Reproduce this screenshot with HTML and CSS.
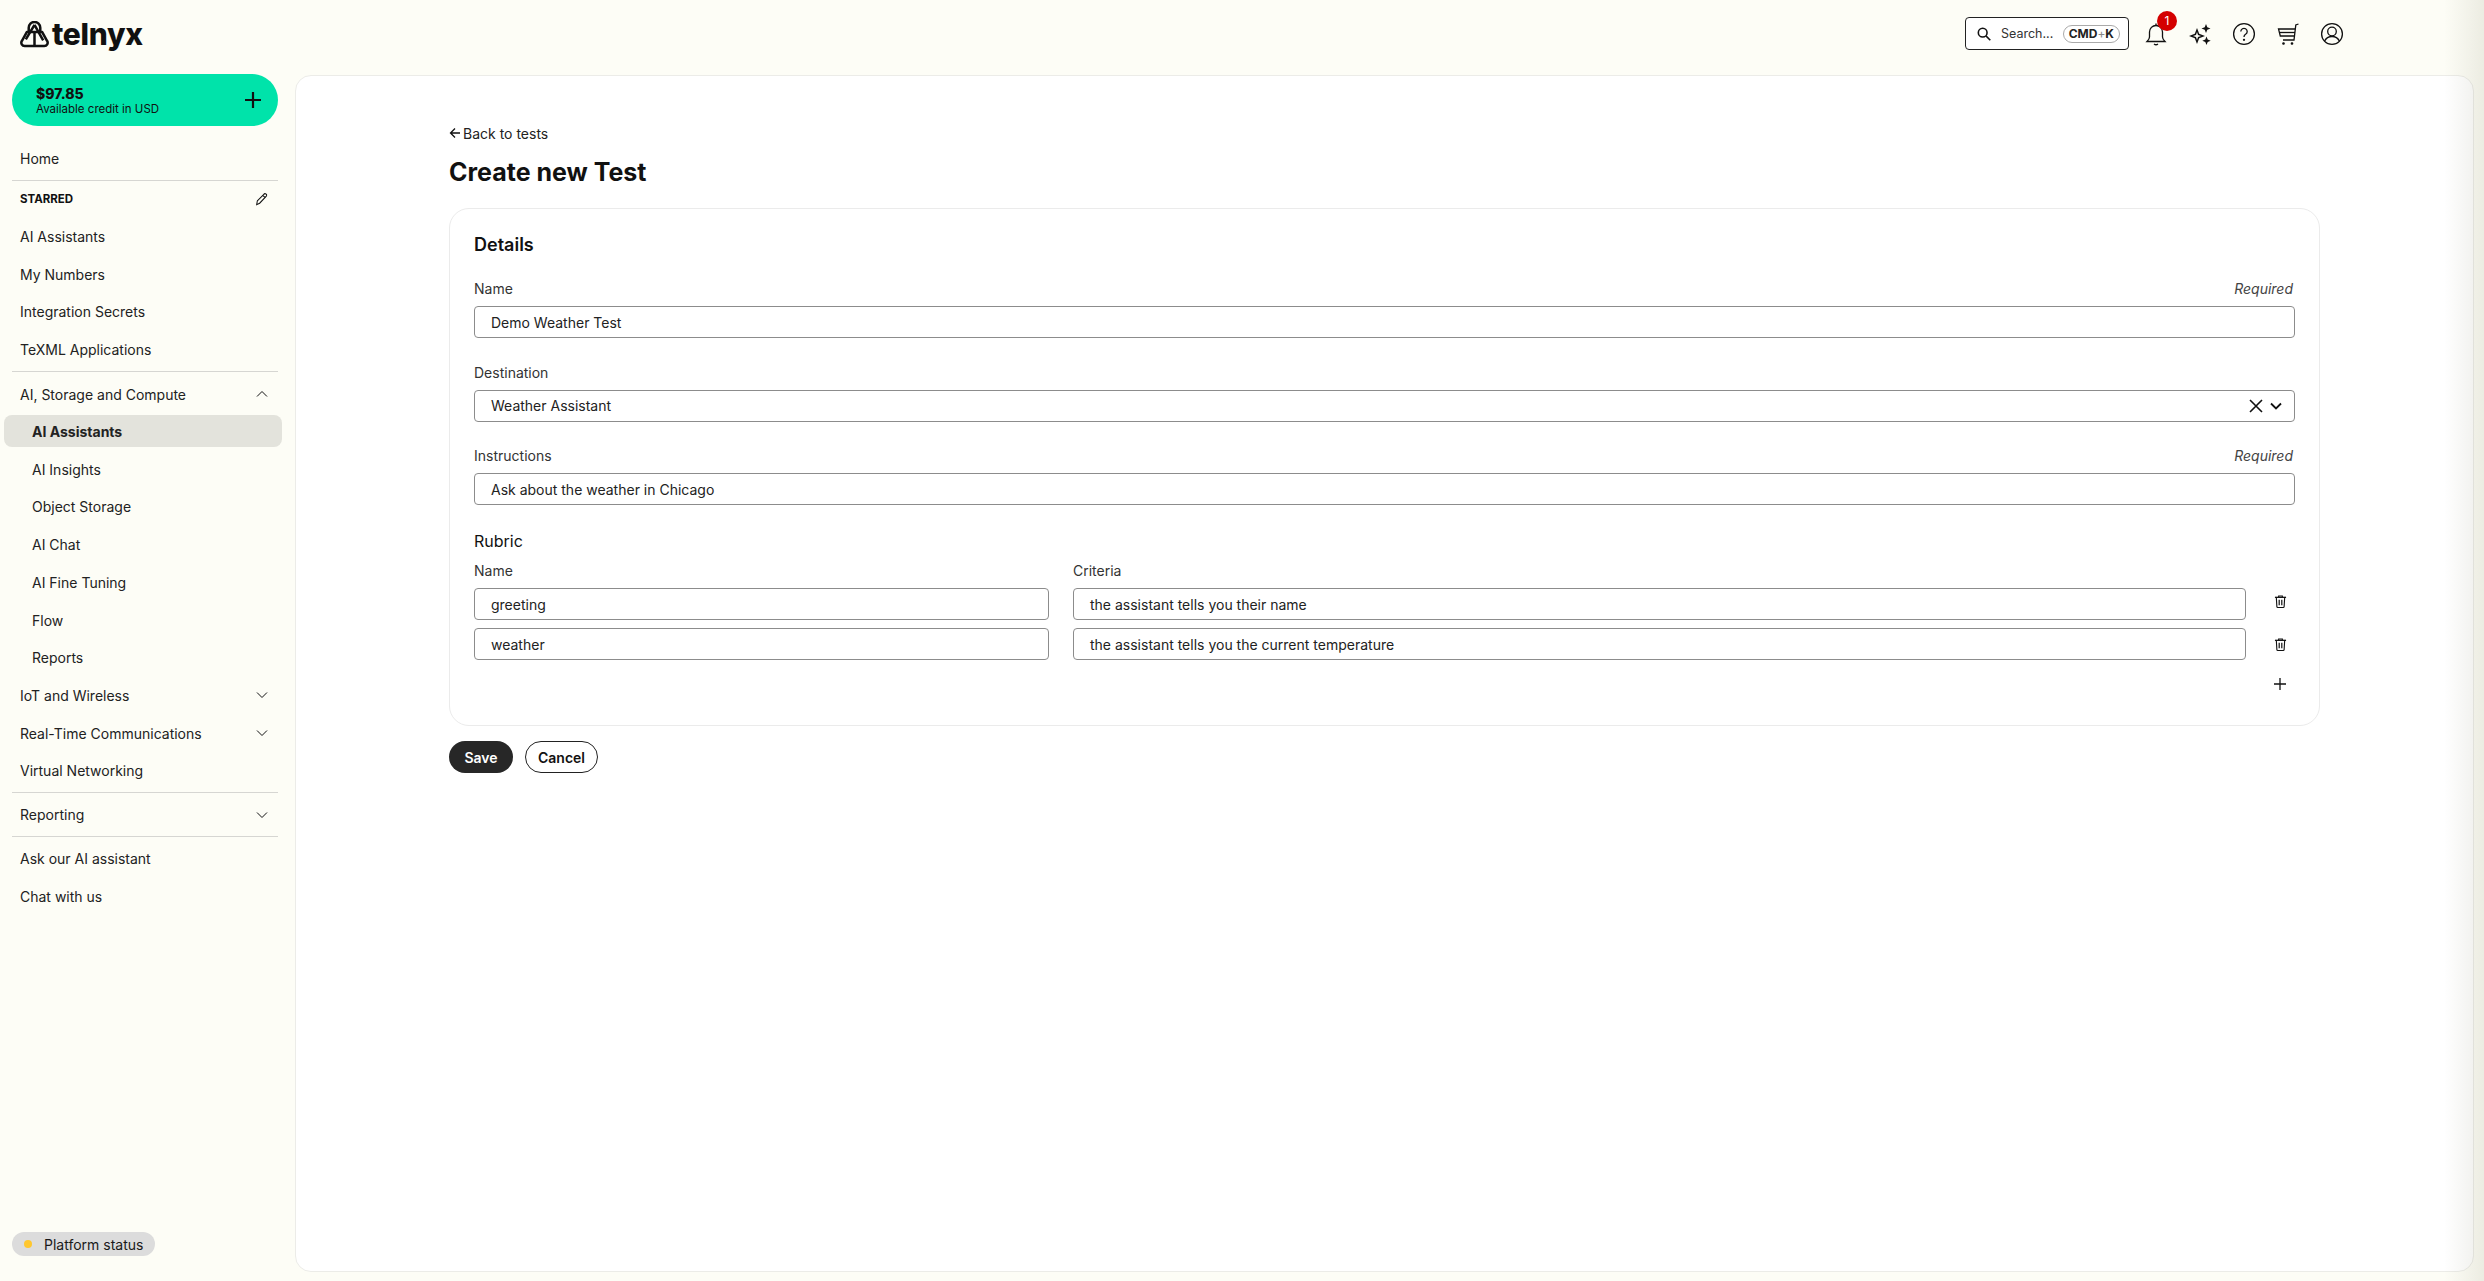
FILE: index.html
```html
<!DOCTYPE html>
<html lang="en">
<head>
<meta charset="utf-8">
<title>Create new Test</title>
<link rel="stylesheet" href="styles.css">
</head>
<body>
<div class="app">
  <div class="page">
    <header class="topbar">
      <a class="logo">
        <svg class="logo-mark" viewBox="0 0 30 28" fill="none" stroke="#111" stroke-width="2.600" stroke-linejoin="round"><path d="M9 12V7a6 6 0 0 1 12 0v5"/><path d="M15 4 6 19M15 4l9 16"/><path d="M7 11.500h16l5 9a3.500 3.500 0 0 1-3 5.500H5a3.500 3.500 0 0 1-3-5.500z"/><path d="M15 12v14"/></svg>
        <span class="logo-text">telnyx</span>
      </a>
      <div class="top-actions">
        <div class="search">
          <svg class="ic-search" viewBox="0 0 16 16" fill="none" stroke="#111" stroke-width="1.800"><circle cx="6.500" cy="6.500" r="5"/><path d="m10.200 10.200 5 5"/></svg>
          <span class="search-text">Search...</span>
          <span class="kbd"><b>CMD</b>+<b>K</b></span>
        </div>
        <div class="icons">
          <span class="icon-btn">
            <svg viewBox="0 0 24 24" fill="none" stroke="#111" stroke-width="1.300"><path d="M12 3.500a6.500 6.500 0 0 0-6.500 6.500v5c0 2-1 3-2.500 4.500h18c-1.500-1.500-2.500-2.500-2.500-4.500v-5A6.500 6.500 0 0 0 12 3.500Z"/><path d="M12 3.500V1.500"/><path d="M10 22q2 1.500 4 0"/></svg>
            <span class="badge">1</span>
          </span>
          <span class="icon-btn">
            <svg viewBox="0 0 24 24" fill="#111"><path d="M9 6 11.200 11.800 17 14 11.200 16.200 9 22 6.800 16.200 1 14 6.800 11.800Z M9 10 8 13 5 14 8 15 9 18 10 15 13 14 10 13Z" fill-rule="evenodd"/><path d="m18 2 1.300 3.200L22.500 6.500l-3.200 1.300L18 11l-1.300-3.200L13.500 6.500l3.200-1.300Z"/><path d="m18.500 14.500 1.200 3 3 1.200-3 1.200-1.200 3-1.200-3-3-1.200 3-1.200Z"/></svg>
          </span>
          <span class="icon-btn">
            <svg viewBox="0 0 24 24" fill="none" stroke="#111" stroke-width="1.300"><circle cx="12" cy="12" r="10.400"/><path d="M8.800 9.500a3.200 3.200 0 1 1 4.800 2.800c-1 .6-1.600 1.200-1.600 2.600"/><circle cx="12" cy="17.800" r=".5" fill="#111"/></svg>
          </span>
          <span class="icon-btn">
            <svg viewBox="0 0 24 24" fill="none" stroke="#111" stroke-width="1.300"><path d="M22.500 2 19.800 3 18 18H7"/><path d="M19.300 7H2.500l1.800 7h14.200"/><path d="M3.500 10.500h15.500"/><circle cx="7.500" cy="21.500" r=".7" fill="#111"/><circle cx="16" cy="21.500" r=".7" fill="#111"/></svg>
          </span>
          <span class="icon-btn">
            <svg viewBox="0 0 24 24" fill="none" stroke="#111" stroke-width="1.300"><circle cx="12" cy="12" r="10.400"/><circle cx="12" cy="9.500" r="4.300"/><path d="M4.500 19.200c1.500-3 4-4.700 7.500-4.700s6 1.700 7.500 4.700"/></svg>
          </span>
        </div>
      </div>
    </header>
    <div class="body-row">
      <aside class="sidebar">
        <div class="credit">
          <div class="credit-text"><strong>$97.85</strong><span>Available credit in USD</span></div>
          <svg class="credit-plus" viewBox="0 0 18 18" stroke="#111" stroke-width="2.200"><path d="M9 1v16M1 9h16"/></svg>
        </div>
        <nav class="nav">
          <a class="row">Home</a>
          <hr class="rule">
          <div class="row row-star"><span class="star">STARRED</span>
            <svg class="pencil" viewBox="0 0 14 14" fill="none" stroke="#111" stroke-width="1.100"><path d="M2.500 8.500 9.500 1.500a1.500 1.500 0 0 1 2.700 1.800L5 11 1.800 12.500Z"/><path d="m8.500 2.800 2.400 2"/></svg>
          </div>
          <a class="row">AI Assistants</a>
          <a class="row">My Numbers</a>
          <a class="row">Integration Secrets</a>
          <a class="row">TeXML Applications</a>
          <hr class="rule rule-mid">
          <a class="row row-section">AI, Storage and Compute
            <svg class="chev" viewBox="0 0 12 8" fill="none" stroke="#111" stroke-width="1"><path d="m1 6.500 5-5 5 5"/></svg></a>
          <a class="row sub active">AI Assistants</a>
          <a class="row sub">AI Insights</a>
          <a class="row sub">Object Storage</a>
          <a class="row sub">AI Chat</a>
          <a class="row sub">AI Fine Tuning</a>
          <a class="row sub">Flow</a>
          <a class="row sub">Reports</a>
          <a class="row">IoT and Wireless
            <svg class="chev" viewBox="0 0 12 8" fill="none" stroke="#111" stroke-width="1"><path d="m1 1.500 5 5 5-5"/></svg></a>
          <a class="row">Real-Time Communications
            <svg class="chev" viewBox="0 0 12 8" fill="none" stroke="#111" stroke-width="1"><path d="m1 1.500 5 5 5-5"/></svg></a>
          <a class="row">Virtual Networking</a>
          <hr class="rule">
          <a class="row row-section">Reporting
            <svg class="chev" viewBox="0 0 12 8" fill="none" stroke="#111" stroke-width="1"><path d="m1 1.500 5 5 5-5"/></svg></a>
          <hr class="rule rule-tight">
          <a class="row">Ask our AI assistant</a>
          <a class="row">Chat with us</a>
        </nav>
        <div class="status"><i class="dot"></i>Platform status</div>
      </aside>
      <main class="panel">
        <a class="back">
          <svg viewBox="0 0 12 12" fill="none" stroke="#111" stroke-width="1.300"><path d="M11 6H1.500M6 1.500 1.500 6 6 10.500"/></svg>Back to tests</a>
        <h1 class="title">Create new Test</h1>
        <section class="card">
          <h2 class="card-title">Details</h2>
          <div class="field">
            <div class="label-row"><label>Name</label><em>Required</em></div>
            <div class="input">Demo Weather Test</div>
          </div>
          <div class="field">
            <div class="label-row"><label>Destination</label></div>
            <div class="input select">Weather Assistant
              <span class="select-icons">
                <svg class="x" viewBox="0 0 14 14" fill="none" stroke="#111" stroke-width="1.600"><path d="m1 1 12 12M13 1 1 13"/></svg>
                <svg class="down" viewBox="0 0 12 8" fill="none" stroke="#111" stroke-width="1.800"><path d="m1 1.500 5 5 5-5"/></svg>
              </span>
            </div>
          </div>
          <div class="field">
            <div class="label-row"><label>Instructions</label><em>Required</em></div>
            <div class="input">Ask about the weather in Chicago</div>
          </div>
          <h3 class="rubric">Rubric</h3>
          <div class="rubric-grid">
            <label>Name</label><label>Criteria</label><span></span>
            <div class="input">greeting</div>
            <div class="input">the assistant tells you their name</div>
            <span class="trash trash-up"><svg viewBox="0 0 14 15" fill="none" stroke="#111" stroke-width="1.200"><path d="M1 3h12" stroke-width="1.400"/><path d="M5 3V1.600h4V3"/><path d="M2.500 3l.6 10a1 1 0 0 0 1 .9h5.800a1 1 0 0 0 1-.9l.6-10"/><path d="M5.600 5.500v6M8.400 5.500v6" stroke-width="1.300"/></svg></span>
            <div class="input">weather</div>
            <div class="input">the assistant tells you the current temperature</div>
            <span class="trash"><svg viewBox="0 0 14 15" fill="none" stroke="#111" stroke-width="1.200"><path d="M1 3h12" stroke-width="1.400"/><path d="M5 3V1.600h4V3"/><path d="M2.500 3l.6 10a1 1 0 0 0 1 .9h5.800a1 1 0 0 0 1-.9l.6-10"/><path d="M5.600 5.500v6M8.400 5.500v6" stroke-width="1.300"/></svg></span>
          </div>
          <div class="add-row"><svg viewBox="0 0 12 12" stroke="#111" stroke-width="1.300"><path d="M6 0v12M0 6h12"/></svg></div>
        </section>
        <div class="actions">
          <button class="btn primary">Save</button>
          <button class="btn ghost">Cancel</button>
        </div>
      </main>
    </div>
  </div>
  <div class="edge-fade"></div>
</div>
</body>
</html>
```

FILE: styles.css
```css
* { box-sizing: border-box; }
html, body { margin: 0; height: 100%; }
body {
  background: #fdfdf6;
  color: #1a1a1a;
  font-family: Inter, "Liberation Sans", sans-serif;
  font-size: 14px;
  overflow: hidden;
}
.app { position: relative; height: 1281px; padding-right: 10px; }
.page { height: 100%; display: flex; flex-direction: column; }
.edge-fade {
  position: absolute;
  top: 0;
  right: 0;
  bottom: 0;
  width: 40px;
  background: linear-gradient(to right, rgba(120, 120, 90, 0), rgba(120, 120, 90, .13));
  pointer-events: none;
}
.topbar {
  height: 75px;
  display: flex;
  align-items: flex-start;
  justify-content: space-between;
  padding: 18px 0 0 20px;
}
.logo { display: flex; align-items: center; gap: 3px; height: 32px; }
.logo-mark { width: 29px; height: 27px; }
.logo-text { font-weight: 800; font-size: 30px; letter-spacing: -.3px; line-height: 32px; color: #111; }
.top-actions { display: flex; align-items: center; margin-right: 130px; gap: 15px; margin-top: -1px; }
.search {
  width: 164px;
  height: 33px;
  display: flex;
  align-items: center;
  padding: 0 8px 0 11px;
  background: #fff;
  border: 1px solid #222;
  border-radius: 4px;
  font-size: 12.5px;
}
.ic-search { width: 14px; height: 14px; margin-right: 10px; flex: none; }
.search-text { color: #333; }
.kbd {
  margin-left: auto;
  height: 18px;
  padding: 0 5px;
  display: flex;
  align-items: center;
  border: 1px solid #aaa;
  border-radius: 9px;
  font-size: 12px;
  color: #888;
}
.kbd b { color: #222; font-weight: 700; }
.icons { display: flex; gap: 20px; align-items: center; }
.icon-btn { position: relative; width: 24px; height: 24px; display: block; }
.icon-btn svg { width: 24px; height: 24px; display: block; }
.badge {
  position: absolute;
  top: -11px;
  right: -9px;
  width: 20px;
  height: 20px;
  border-radius: 50%;
  background: #d40000;
  color: #fff;
  font-size: 12px;
  line-height: 20px;
  text-align: center;
}
.body-row { flex: 1; display: flex; min-height: 0; padding-bottom: 9px; }
.sidebar { width: 295px; flex: none; display: flex; flex-direction: column; padding: 0 17px 16px 4px; margin-top: -1px; }
.credit {
  margin-left: 8px;
  height: 52px;
  background: #00e3aa;
  border-radius: 26px;
  display: flex;
  align-items: center;
  justify-content: space-between;
  padding: 0 16px 0 24px;
  flex: none;
}
.credit-text { display: flex; flex-direction: column; padding-top: 2px; line-height: 15px; font-size: 11.5px; color: #111; }
.credit-text strong { font-size: 14px; font-weight: 800; line-height: 17px; }
.credit-plus { width: 18px; height: 18px; }
.nav { display: flex; flex-direction: column; margin-top: 14px; }
.row {
  height: 37.7px;
  padding: 0 10px 0 16px;
  display: flex;
  align-items: center;
  justify-content: space-between;
  color: #222;
  font-size: 14px;
  flex: none;
}
.row-section { height: 44px; }
.row-star { height: 37px; }
.star { font-size: 11.5px; font-weight: 700; color: #111; }
.pencil { width: 13px; height: 13px; }
.sub { padding-left: 28px; }
.active {
  background: #e3e3dc;
  border-radius: 8px;
  font-weight: 700;
  height: 32px;
  margin: -1px -4px 3px 0;
}
.chev { width: 12px; height: 8px; }
.rule { width: calc(100% - 8px); border: 0; border-top: 1px solid #d6d6d2; margin: 2px 0 0 8px; }
.rule-mid { margin-top: 3px; }
.rule-tight { margin: -1px 0 3px 8px; }
.status {
  margin: auto 0 0 8px;
  width: 143px;
  height: 24px;
  background: #dcdcdc;
  border-radius: 12px;
  display: flex;
  align-items: center;
  padding-left: 12px;
  gap: 12px;
  font-size: 14px;
  flex: none;
}
.dot { width: 8px; height: 8px; border-radius: 50%; background: #ffc72e; }
.panel {
  flex: 1;
  min-width: 0;
  background: #fff;
  border: 1px solid #ecece8;
  border-radius: 16px;
  padding: 48px 153px 0;
}
.back { display: flex; align-items: center; gap: 2px; height: 18px; font-size: 14px; color: #222; }
.back svg { width: 12px; height: 12px; }
.title { margin: 14px 0 0; font-size: 25px; line-height: 32px; font-weight: 700; color: #111; }
.card {
  margin-top: 20px;
  border: 1px solid #ebebeb;
  border-radius: 20px;
  padding: 24px 24px 34.5px;
}
.card-title { margin: 0; font-size: 18px; line-height: 24px; font-weight: 600; color: #111; }
.field { margin-top: 25.5px; }
.card-title + .field { margin-top: 23px; }
.label-row { display: flex; justify-content: space-between; align-items: center; height: 17px; padding-right: 2px; margin-bottom: 9px; }
.label-row label, .rubric-grid label { font-size: 14px; color: #333; }
.label-row em { font-size: 14px; color: #444; }
.input {
  height: 32px;
  background: #fff;
  border: 1px solid #8c8c8c;
  border-radius: 4px;
  display: flex;
  align-items: center;
  padding: 0 16px;
  font-size: 14px;
  color: #222;
}
.select { justify-content: space-between; padding-right: 12px; }
.select-icons { display: flex; align-items: center; gap: 7px; }
.x { width: 14px; height: 14px; }
.down { width: 12px; height: 8px; }
.rubric { margin: 25px 0 0; font-size: 16px; line-height: 22px; font-weight: 400; color: #111; }
.rubric-grid {
  margin-top: 10px;
  display: grid;
  grid-template-columns: 575px 1fr 25px;
  column-gap: 24px;
  row-gap: 8px;
  align-items: center;
}
.rubric-grid label { line-height: 17px; margin-bottom: 1px; }
.trash { display: flex; padding-left: 3.5px; }
.trash-up { margin-top: -6px; }
.trash svg { width: 13px; height: 15px; }
.add-row { display: flex; justify-content: flex-end; padding-right: 9.5px; margin-top: 18px; }
.add-row svg { width: 12px; height: 12px; }
.actions { display: flex; gap: 12px; margin-top: 15.5px; }
.btn { height: 32px; border-radius: 16px; font: 600 14px Inter, sans-serif; padding: 0; }
.primary { width: 64px; background: #272727; color: #fff; border: 0; }
.ghost { width: 73px; background: #fff; color: #111; border: 1px solid #222; }
```
